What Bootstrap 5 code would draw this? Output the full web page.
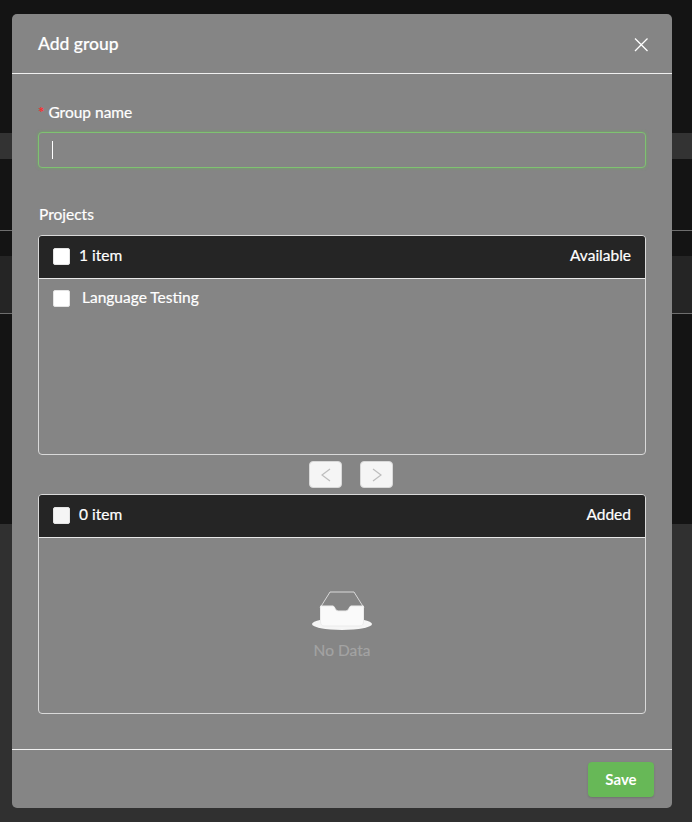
<!DOCTYPE html>
<html lang="en">
<head>
  <meta charset="UTF-8">
  <title>Add group</title>
  <meta name="viewport" content="width=device-width, initial-scale=1">
  <link href="https://cdn.jsdelivr.net/npm/bootstrap@5.3.0/dist/css/bootstrap.min.css" rel="stylesheet">
  <style>
    html, body {
      height: 822px;
      overflow: hidden;
    }

    body {
      font-family: Lato, "Liberation Sans", sans-serif;
      font-size: 16px;
      background: #141414;
      color: #fff;
      -webkit-text-stroke: 0.2px currentColor;
    }

    /* page behind the modal */
    .backdrop-page {
      height: 822px;
      display: flex;
      flex-direction: column;
    }
    .strip-top { height: 133px; }
    .strip-head { height: 26px; background: #333; }
    .strip-a { height: 72px; border-bottom: 1px solid #6e6e6e; }
    .strip-gap { height: 25px; }
    .strip-row { height: 58px; background: #252525; border-bottom: 1px solid #6e6e6e; }
    .strip-rest { height: 210px; }
    .strip-foot { flex: 1; background: #303030; }

    .group-modal {
      position: absolute;
      top: 14px;
      left: 12px;
      width: 660px;
      height: 794px;
      background: #858585;
      border-radius: 5px;
      display: flex;
      flex-direction: column;
    }

    .group-head {
      height: 60px;
      padding: 0 26px;
      border-bottom: 1px solid #f0f0f0;
      display: flex;
      align-items: center;
      justify-content: space-between;
    }
    .group-head h5 {
      font-size: 17.500px;
      font-weight: 500;
      margin: 0;
      line-height: 24px;
    }
    .close-x {
      background: none;
      border: 0;
      padding: 0;
      width: 16px;
      height: 16px;
      display: flex;
      margin-right: -3px;
    }

    .group-body {
      flex: 1;
      padding: 28px 26px 0;
    }

    .field-label {
      font-size: 15.500px;
      line-height: 20px;
      margin-bottom: 10px;
      display: block;
    }
    .field-label-gap { margin-bottom: 11px; padding-left: 1px; }
    .req { color: #ff2a2a; margin-right: 4px; font-size: 15px; }

    .name-input {
      height: 36px;
      background: transparent;
      border: 1px solid #7fc271;
      border-radius: 4px;
      box-shadow: 0 0 3px rgba(103, 184, 87, .8);
      margin-bottom: 36px;
      padding: 8px 13px;
      display: flex;
    }
    .caret-bar { width: 1px; height: 18px; background: #fff; }

    .transfer-box {
      border: 1px solid #d9d9d9;
      border-radius: 4px;
      height: 220px;
      display: flex;
      flex-direction: column;
    }
    .transfer-head {
      height: 43px;
      flex: none;
      background: #252525;
      border-bottom: 1px solid #e8e8e8;
      border-radius: 3px 3px 0 0;
      padding: 0 14px 2px;
      display: flex;
      align-items: center;
      justify-content: space-between;
      font-size: 15.500px;
    }
    .row-text { margin-bottom: 2px; }
    .tick-box {
      width: 17px;
      height: 17px;
      background: #fff;
      border: 1px solid #e4e4e4;
      border-radius: 2px;
      display: block;
      flex: none;
    }
    .tick-off { background: #f5f5f5; }
    .count-gap { gap: 9px; }
    .transfer-row {
      padding: 8px 14px;
      font-size: 15.500px;
      line-height: 20px;
    }

    .move-btn {
      width: 33px;
      height: 27px;
      padding: 0;
      background: #f5f5f5;
      border: 1px solid #d9d9d9;
      border-radius: 4px;
      display: flex;
      align-items: center;
      justify-content: center;
    }
    .move-bar { height: 39px; gap: 18px; padding-left: 18px; }

    .no-data {
      color: #a3a3a3;
      font-size: 15.500px;
      line-height: 20px;
      padding-top: 53px;
    }
    .no-data-text { margin-top: 9px; }

    .group-foot {
      height: 59px;
      border-top: 1px solid #f0f0f0;
      padding: 12px 18px 0;
      display: flex;
      justify-content: flex-end;
      align-items: flex-start;
    }
    .save-btn {
      width: 66px;
      height: 35px;
      padding: 0;
      background: #67b857;
      border: 0;
      border-radius: 4px;
      color: #fff;
      font-size: 15px;
      font-weight: 700;
      -webkit-text-stroke: 0;
      box-shadow: 0 1px 2px rgba(0, 0, 0, .15);
    }
  </style>
</head>
<body>
  <div class="backdrop-page">
    <div class="strip-top"></div>
    <div class="strip-head"></div>
    <div class="strip-a"></div>
    <div class="strip-gap"></div>
    <div class="strip-row"></div>
    <div class="strip-rest"></div>
    <div class="strip-foot"></div>
  </div>

  <div class="group-modal">
    <div class="group-head">
      <h5>Add group</h5>
      <button type="button" class="close-x" aria-label="Close">
        <svg width="16" height="16" viewBox="0 0 16 16"><path d="M2 2.500 L14.500 15 M14.500 2.500 L2 15" stroke="#fff" stroke-width="1.300" fill="none"/></svg>
      </button>
    </div>

    <div class="group-body">
      <label class="field-label"><span class="req">*</span>Group name</label>
      <div class="name-input"><span class="caret-bar"></span></div>

      <label class="field-label field-label-gap">Projects</label>
      <div class="transfer-box">
        <div class="transfer-head">
          <span class="d-flex align-items-center count-gap"><span class="tick-box"></span><span>1 item</span></span>
          <span>Available</span>
        </div>
        <div class="transfer-row d-flex align-items-center"><span class="tick-box me-2"></span><span class="ms-1 row-text">Language Testing</span></div>
      </div>

      <div class="move-bar d-flex justify-content-center align-items-center">
        <button type="button" class="move-btn" aria-label="Left"><svg width="12" height="14" viewBox="0 0 12 14"><path d="M10 1 L2 7 L10 13" stroke="#bdbdbd" stroke-width="1.200" fill="none"/></svg></button>
        <button type="button" class="move-btn" aria-label="Right"><svg width="12" height="14" viewBox="0 0 12 14"><path d="M2 1 L10 7 L2 13" stroke="#bdbdbd" stroke-width="1.200" fill="none"/></svg></button>
      </div>

      <div class="transfer-box">
        <div class="transfer-head">
          <span class="d-flex align-items-center count-gap"><span class="tick-box tick-off"></span><span>0 item</span></span>
          <span>Added</span>
        </div>
        <div class="no-data d-flex flex-column align-items-center">
          <svg width="60" height="40" viewBox="0 0 60 40">
            <ellipse cx="30" cy="33" rx="30" ry="6" fill="#f5f5f5"/>
            <path d="M8 17 L18 1 H42 L52 17" fill="none" stroke="#d9d9d9" stroke-width="1"/>
            <path d="M8.500 15 H21 C23 15 23 20 26 20 H34 C37 20 37 15 39 15 H51.500 V31 C51.500 33.500 50 35 48 35 H12 C10 35 8.500 33.500 8.500 31 Z" fill="#fafafa" stroke="#ececec" stroke-width="1"/>
          </svg>
          <div class="no-data-text">No Data</div>
        </div>
      </div>
    </div>

    <div class="group-foot">
      <button type="button" class="save-btn">Save</button>
    </div>
  </div>

  <script src="https://cdn.jsdelivr.net/npm/bootstrap@5.3.0/dist/js/bootstrap.bundle.min.js"></script>
</body>
</html>
